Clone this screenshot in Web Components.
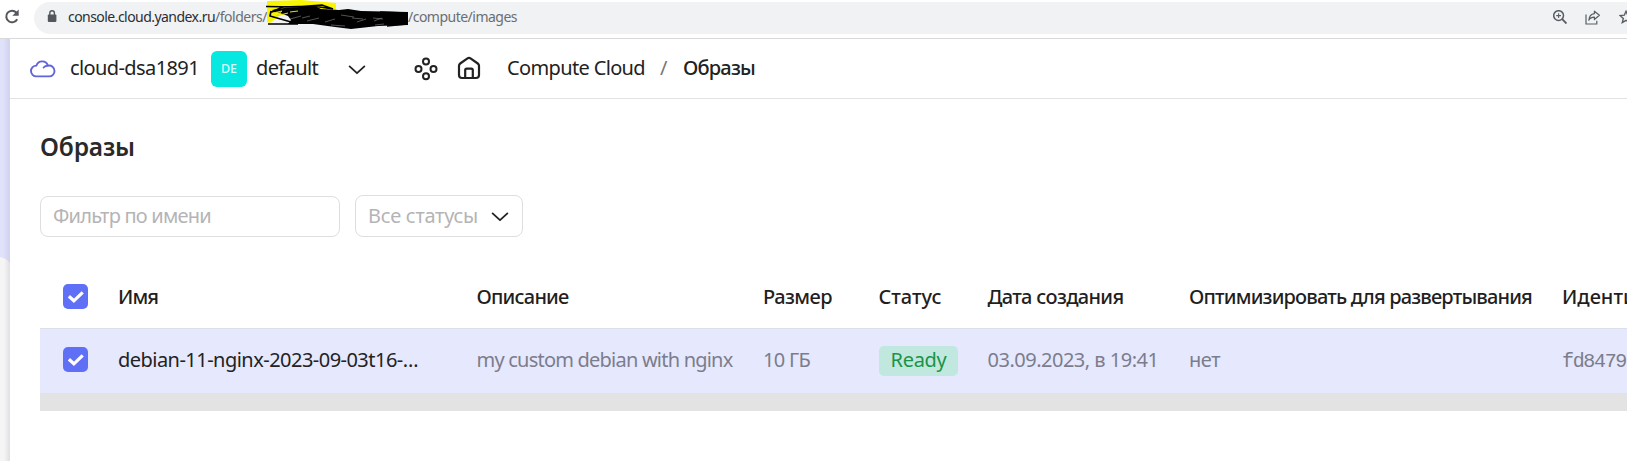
<!DOCTYPE html>
<html lang="ru">
<head>
<meta charset="utf-8">
<title>Образы</title>
<style>
html,body{margin:0;height:461px;overflow:hidden;background:#fff;font-family:"Noto Sans","Open Sans",sans-serif;color:#222}
</style>
</head>
<body>
<cloud-console></cloud-console>
<script>
const define = (name, html, after) => customElements.define(name, class extends HTMLElement {
  connectedCallback() {
    if (this.shadowRoot) return;
    const t = document.createElement('template');
    t.innerHTML = html;
    this.attachShadow({mode: 'open'}).append(t.content.cloneNode(true));
    if (after) after(this);
  }
});

/* Single-line label whose tracking is adjusted to the width given in its w attribute. */
define('fit-text', `<style>:host{display:block;white-space:pre;flex:none}span{display:inline-block}</style><span><slot></slot></span>`, el => {
  const w = parseFloat(el.getAttribute('w'));
  if (!w) return;
  const s = el.shadowRoot.querySelector('span');
  const n = el.textContent.length;
  const natural = s.getBoundingClientRect().width;
  s.style.letterSpacing = ((w - natural) / n).toFixed(3) + 'px';
  el.style.width = w + 'px';
});

define('check-box', `<style>:host{display:block;width:25px;height:25px;flex:none}svg{display:block}</style>
<svg width="25" height="25" viewBox="0 0 25 25"><rect width="25" height="25" rx="5" fill="#6070f6"/><path d="M5.900 12.200l5 4.600 8.800-8.400" fill="none" stroke="#fff" stroke-width="3.200"/></svg>`);

define('chevron-icon', `<style>:host{display:block;flex:none}svg{display:block}</style>
<svg width="18" height="10" viewBox="0 0 18 10"><path d="M1.600 1.400L9 8.200l7.400-6.800" fill="none" stroke="#222" stroke-width="1.800" stroke-linecap="round" stroke-linejoin="round"/></svg>`);

define('status-badge', `<style>:host{display:flex;box-sizing:border-box;width:79px;height:30px;padding-left:12px;border-radius:5px;background:#c1e8df;color:#1a9448;line-height:29px}</style><slot></slot>`);

define('browser-bar', `<style>
:host{display:flex;height:38px;box-sizing:content-box;border-bottom:1px solid #d9d9dc;background:#fff;align-items:flex-start}
.reload{margin:9px 0 0 4px;width:16px;height:16px;flex:none}
.pill{display:flex;align-items:center;margin:2px 0 0 14px;height:32px;width:1620px;flex:none;border-radius:16px;background:#f0f2f4;font-size:14px;line-height:30px;color:#6a6e73}
.pill fit-text{margin-bottom:2px}
.lock{margin:0 11px 3px 13px;flex:none}
.dark{color:#2b2e33}
.ink{width:141px;height:32px;flex:none;overflow:visible}
.tools{display:flex;gap:18px;margin:0 0 2px 1036px;align-items:center;flex:none}
svg{display:block}
</style>
<svg class="reload" viewBox="0 0 16 16"><path d="M13.200 10.200A5.800 5.800 0 1 1 12.300 3.500" fill="none" stroke="#54585d" stroke-width="2"/><path d="M14.700.4v6.300H8.400z" fill="#54585d"/></svg>
<div class="pill">
<svg class="lock" width="10" height="13" viewBox="0 0 10 13"><rect x=".8" y="4.600" width="8.600" height="7.400" rx="1" fill="#54585d"/><path d="M2.800 5V3.100a2.300 2.300 0 0 1 4.600 0V5" fill="none" stroke="#54585d" stroke-width="1.400"/></svg>
<fit-text class="dark" w="147">console.cloud.yandex.ru</fit-text><fit-text w="52">/folders/</fit-text>
<svg class="ink" viewBox="267 2 141 32"><path d="M267 1l34-1 35 3v7l-14 2-36-2-16 13-3-1z" fill="#f9f500"/>
<path d="M272 10l12-2 31-2 6 3 18 1 9-1 13 2 47 1 0 13-30 1-18 2-9 1-16-2-22-3-25 0 3-4-3-4z" fill="#000"/>
<g fill="none" stroke="#000" stroke-width="1.700"><path d="M266 6.500l28 .5 28-2 11 4-20-3-30 1-12 5 20-3M268 24l30 0-28-8 1-5M380 12l27 1-11 2 10 2-8 2 7 3M386 22l21 2-20 2"/></g>
<path d="M273 13l9-2-6 5 12-3M290 12l8-1" fill="none" stroke="#e6e000" stroke-width="1"/>
<path d="M290 19l11-3m6 5l12-3m6 4l10-3m6-4l13 2m3 5l9-3m8 2l8-3m-51 7l14 1m-43-8l8-2m42 2l11 1m10-1l10 1m-8 6l9-1" fill="none" stroke="#888a8c" stroke-width=".6"/></svg>
<fit-text w="109">/compute/images</fit-text>
<div class="tools">
<svg width="14" height="14" viewBox="0 0 14 14" fill="none" stroke="#5a5e62" stroke-width="1.500"><circle cx="5.600" cy="5.600" r="4.900"/><path d="M9.200 9.200l4.300 4.300" stroke-width="1.900"/><path d="M5.600 3.200V8M3.200 5.600H8" stroke-width="1.100"/></svg>
<svg width="16" height="15" viewBox="0 0 16 15" fill="none" stroke="#5a5e62" stroke-width="1.200"><path d="M1 4.500v9.500h10.800v-3.200"/><path d="M9.400 1.200L14.400 5.300 9.400 9.500V7.200C7 7.200 5 8 3.800 10.200 4.200 6.500 6 4 9.400 3.600z" stroke-linejoin="round"/></svg>
<svg width="14" height="14" viewBox="0 0 14 14" fill="none" stroke="#5a5e62" stroke-width="1.400"><path d="M7 1.300l1.700 3.900 4.200.4-3.200 2.800 1 4.200L7 10.400l-3.700 2.200 1-4.200L1.100 5.600l4.200-.4z"/></svg>
</div></div>`);

define('console-header', `<style>
:host{display:flex;align-items:center;height:59px;border-bottom:1px solid #e2e2e2;font-size:20px;line-height:28px;color:#222}
svg{display:block;flex:none}
.cloud{margin:-1px 14px 0 20px}
fit-text{padding-bottom:1px}
.badge{display:flex;align-items:center;justify-content:center;width:36px;height:36px;border-radius:6px;background:#06e8e0;color:#d8fffd;font-size:12.500px;font-weight:500;margin:0 9px 0 12px;flex:none}
.chev{margin:2px 48px 0 30px}
.home{margin:-1px 26px 0 19px}
.sep{color:#777;margin:0 15px 0 15px}
.cur{font-weight:500}
</style>
<svg class="cloud" width="26" height="20" viewBox="0 0 26 20" fill="none" stroke="#6265d6" stroke-width="1.900" stroke-linecap="round" stroke-linejoin="round"><path d="M6.400 18.400h12.800a5.300 5.300 0 0 0 5.300-5.400 5.400 5.400 0 0 0-6.600-5.300A6 6 0 0 0 6.400 7.600a5.400 5.400 0 0 0 0 10.800zM17.900 7.700c-1.900 0-3.300.6-4.300 1.800"/></svg>
<fit-text w="129">cloud-dsa1891</fit-text>
<div class="badge">DE</div>
<fit-text w="62">default</fit-text>
<chevron-icon class="chev"></chevron-icon>
<svg width="24" height="24" viewBox="0 0 24 24" fill="none" stroke="#222" stroke-width="2"><circle cx="12" cy="4.500" r="3"/><circle cx="4.500" cy="12" r="3"/><circle cx="19.500" cy="12" r="3"/><circle cx="12" cy="19.200" r="3"/></svg>
<svg class="home" width="24" height="24" viewBox="0 0 24 24" fill="none" stroke="#222" stroke-width="2.200" stroke-linejoin="round"><path d="M2 9.800Q2 8.400 3.200 7.500L10.500 2.300q1.500-1 3 0L20.800 7.500Q22 8.400 22 9.800V19a3 3 0 0 1-3 3H5a3 3 0 0 1-3-3z"/><path d="M8.200 22v-7.800a1.500 1.500 0 0 1 1.500-1.500h4.600a1.500 1.500 0 0 1 1.500 1.500V22"/></svg>
<fit-text w="138">Compute Cloud</fit-text>
<fit-text class="sep" w="8">/</fit-text>
<fit-text class="cur" w="72">Образы</fit-text>`);

define('filter-bar', `<style>
:host{display:flex;align-items:flex-end;gap:15px;height:42px;font-size:20px;color:#b4b4b6;font-weight:400}
div{box-sizing:border-box;border:1px solid #dedee0;border-radius:8px;display:flex;align-items:center;padding-bottom:2px}
.in{width:300px;height:41px;padding-left:12px}
.sel{width:168px;height:42px;padding-left:12px}
chevron-icon{margin:3px 0 0 13px}
</style><div class="in"><fit-text w="158">Фильтр по имени</fit-text></div><div class="sel"><fit-text w="110">Все статусы</fit-text><chevron-icon></chevron-icon></div>`);

define('image-table', `<style>
:host{display:block;width:1587px;overflow:hidden;font-size:20px;line-height:28px}
.row{display:grid;grid-template-columns:78px 358.500px 286.500px 115.500px 109px 201.500px 373px 65px;align-items:center}
.head{height:62px;font-weight:500;color:#1f1f1f}
.body{height:64px;border-top:1px solid #dddfea;border-bottom:1px solid #e1e1ea;background:#e6e8fd;color:#7b7d8d;font-weight:400}
.body .name{color:#222}
.body .mono{font:20px "Liberation Mono",monospace;margin:0}
.scroll{height:17px;background:#e3e3e3}
check-box{margin:0 0 1px 23px}
.body check-box{margin:-4px 0 0 23px}
.body fit-text{margin-bottom:2px}
.body status-badge{margin-top:0}
.body status-badge fit-text{margin:-1px 0 0}
.head fit-text{margin-bottom:1px}
</style>
<div class="row head"><check-box></check-box><fit-text w="40">Имя</fit-text><fit-text w="92">Описание</fit-text><fit-text w="69">Размер</fit-text><fit-text w="63">Статус</fit-text><fit-text w="136">Дата создания</fit-text><fit-text w="343">Оптимизировать для развертывания</fit-text><fit-text>Иденти</fit-text></div>
<div class="row body"><check-box></check-box><fit-text class="name" w="300">debian-11-nginx-2023-09-03t16-…</fit-text><fit-text w="256">my custom debian with nginx</fit-text><fit-text w="47">10 ГБ</fit-text><status-badge><fit-text w="56">Ready</fit-text></status-badge><fit-text w="171">03.09.2023, в 19:41</fit-text><fit-text w="31">нет</fit-text><fit-text class="mono" w="64">fd8479</fit-text></div>
<div class="scroll"></div>`);

define('cloud-console', `<style>
:host{display:flex;flex-direction:column;width:1627px;height:461px;overflow:hidden}
browser-bar{flex:none;overflow:hidden}
.app{display:flex;flex:1;min-height:0}
.rail{width:10px;flex:none;background:linear-gradient(90deg,transparent 40%,rgba(80,80,110,.13)),#f5f5f6}
.rail svg{display:block}
.main{flex:1;min-width:0}
.page{padding:31px 0 0 40px;margin-left:-10px}
h1{margin:0 0 48px;font-size:24.500px;line-height:34px;font-weight:600;color:#2a2a2a}
.page filter-bar{margin:-17px 0 29px}
</style>
<browser-bar></browser-bar>
<div class="app">
<div class="rail"><svg width="10" height="224" viewBox="0 0 10 224"><defs><linearGradient id="g"><stop offset=".3" stop-color="#e0e2fb"/><stop offset="1" stop-color="#d0d2ee"/></linearGradient></defs><path d="M0 0h10v224Q6 219 0 218z" fill="url(#g)"/></svg></div>
<div class="main"><console-header></console-header>
<div class="page"><h1><fit-text w="95">Образы</fit-text></h1><filter-bar></filter-bar><image-table></image-table></div></div></div>`);
</script>
</body>
</html>
